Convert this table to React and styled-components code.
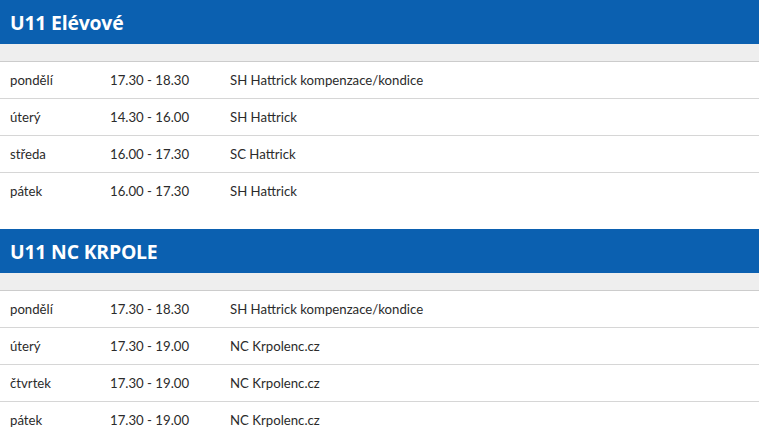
import styled, { createGlobalStyle } from "styled-components";

const GlobalStyle = createGlobalStyle`
  body {
    margin: 0;
    background: #ffffff;
    font-family: "Source Sans Pro", Lato, "Open Sans", sans-serif;
  }
`;

const Page = styled.div`
  width: 759px;
`;

const Group = styled.section`
  margin-bottom: 20px;
`;

const Title = styled.h2`
  margin: 0;
  height: 44px;
  display: flex;
  align-items: center;
  padding: 0 10px;
  background-color: #0b60b0;
  color: #ffffff;
  font-family: "Open Sans", sans-serif;
  font-weight: 700;
  font-size: 19.4px;
  letter-spacing: -0.2px;
`;

const Table = styled.table`
  width: 100%;
  border-collapse: collapse;
  font-size: 13.2px;
  color: #2b2b2b;
`;

const HeadRow = styled.tr`
  height: 17px;
  background: #eeeeee;
  border-bottom: 1px solid #cccccc;
`;

const Row = styled.tr`
  height: 37px;
  border-bottom: 1px solid #d6d6d6;
  &:last-child {
    border-bottom: none;
  }
`;

const Cell = styled.td`
  padding: 0 10px;
  width: ${(p) => p.$w || "auto"};
  vertical-align: middle;
`;

const groups = [
  {
    name: "U11 Elévové",
    rows: [
      ["pondělí", "17.30 - 18.30", "SH Hattrick kompenzace/kondice"],
      ["úterý", "14.30 - 16.00", "SH Hattrick"],
      ["středa", "16.00 - 17.30", "SC Hattrick"],
      ["pátek", "16.00 - 17.30", "SH Hattrick"],
    ],
  },
  {
    name: "U11 NC KRPOLE",
    rows: [
      ["pondělí", "17.30 - 18.30", "SH Hattrick kompenzace/kondice"],
      ["úterý", "17.30 - 19.00", "NC Krpolenc.cz"],
      ["čtvrtek", "17.30 - 19.00", "NC Krpolenc.cz"],
      ["pátek", "17.30 - 19.00", "NC Krpolenc.cz"],
    ],
  },
];

export default function App() {
  return (
    <Page>
      <GlobalStyle />
      {groups.map((g) => (
        <Group key={g.name}>
          <Title>{g.name}</Title>
          <Table>
            <thead>
              <HeadRow>
                <th />
                <th />
                <th />
              </HeadRow>
            </thead>
            <tbody>
              {g.rows.map((r, i) => (
                <Row key={i}>
                  <Cell $w="80px">{r[0]}</Cell>
                  <Cell $w="100px">{r[1]}</Cell>
                  <Cell>{r[2]}</Cell>
                </Row>
              ))}
            </tbody>
          </Table>
        </Group>
      ))}
    </Page>
  );
}
